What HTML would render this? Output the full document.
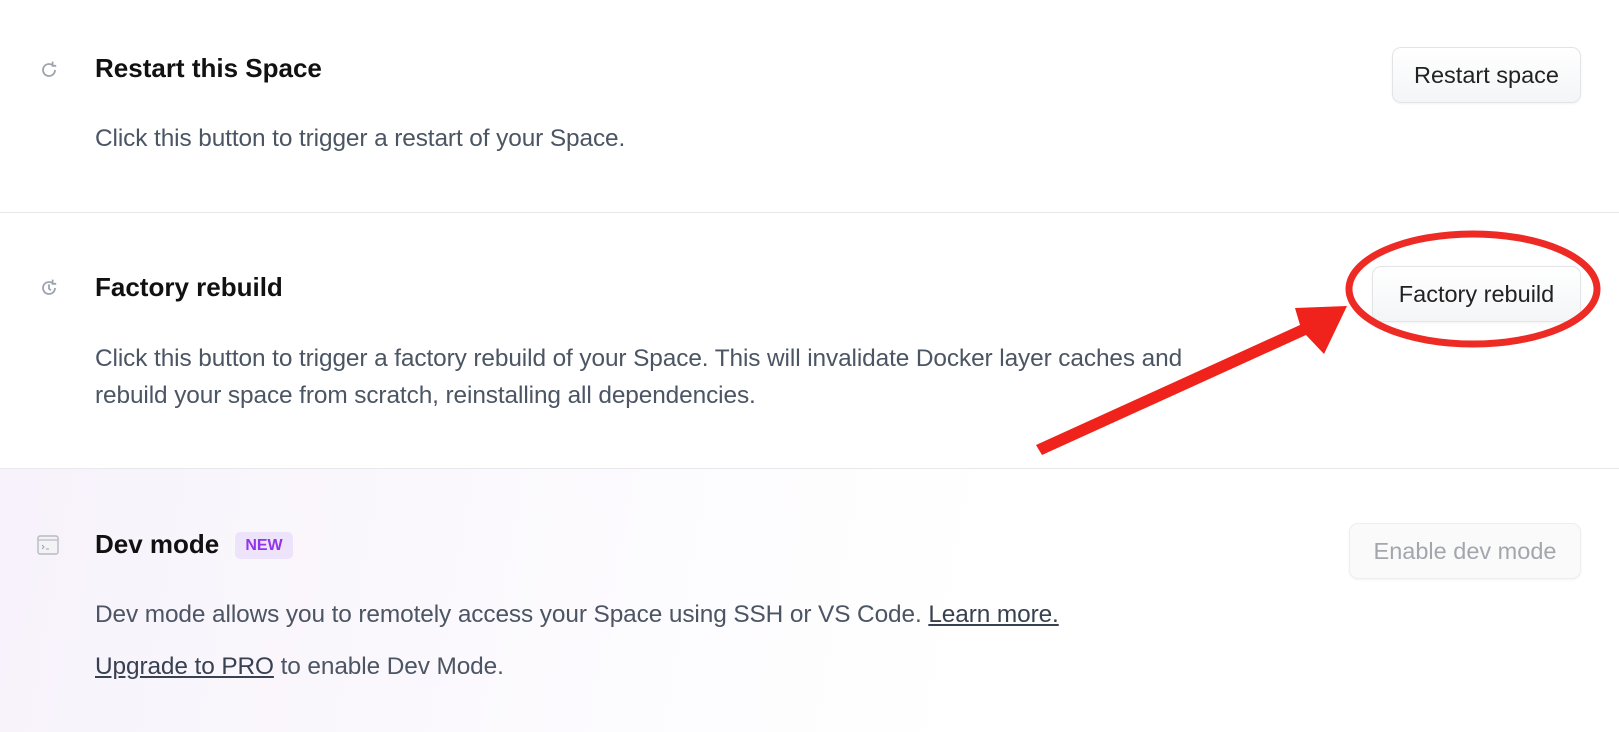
<!DOCTYPE html>
<html><head><style>
body{margin:0;width:1619px;height:732px;background:#fff;font-family:"Liberation Sans",sans-serif;position:relative;overflow:hidden}
.t{position:absolute;left:95px;font-weight:bold;font-size:26px;color:#111}
.d{position:absolute;left:95px;font-size:24.4px;color:#4b5563;line-height:37px;white-space:nowrap;letter-spacing:-0.1px}
.hr{position:absolute;left:0;right:0;height:1px;background:#e8e8ec}
.btn{position:absolute;border:1px solid #e3e4e8;border-radius:9px;background:linear-gradient(#fff,#f4f5f7);font-size:23.5px;color:#222;display:flex;align-items:center;justify-content:center;box-shadow:0 1px 2px rgba(0,0,0,.05)}
.ic{position:absolute;left:37px}
u{color:#374151}
</style></head><body>
<div style="position:absolute;left:0;top:468px;width:1619px;height:264px;background:linear-gradient(100deg,#f7f2fb 0%,#fbf9fd 30%,#fff 60%)"></div>
<svg class="ic" style="top:58px" width="24" height="24" viewBox="0 0 20 20"><path d="M15 10a5 5 0 1 1-2-4" fill="none" stroke="#9ca3af" stroke-width="1.5"/><path d="M13 3v3.5h3" fill="none" stroke="#9ca3af" stroke-width="1.5"/></svg>
<div class="t" style="top:53px">Restart this Space</div>
<div class="d" style="top:120px">Click this button to trigger a restart of your Space.</div>
<div class="btn" style="left:1392px;top:47px;width:187px;height:54px">Restart space</div>
<div class="hr" style="top:212px"></div>
<svg class="ic" style="top:276px" width="24" height="24" viewBox="0 0 20 20"><path d="M15 10a5 5 0 1 1-2-4" fill="none" stroke="#9ca3af" stroke-width="1.5"/><path d="M13 3v3.5h3M10 7v3.5l1.5 1.5" fill="none" stroke="#9ca3af" stroke-width="1.5"/></svg>
<div class="t" style="top:272px">Factory rebuild</div>
<div class="d" style="top:340px">Click this button to trigger a factory rebuild of your Space. This will invalidate Docker layer caches and<br>rebuild your space from scratch, reinstalling all dependencies.</div>
<div class="btn" style="left:1372px;top:266px;width:207px;height:54px">Factory rebuild</div>
<div class="hr" style="top:468px"></div>
<svg class="ic" style="top:535px" width="22" height="20" viewBox="0 0 22 20"><rect x="1" y="1" width="20" height="18" rx="2" fill="#f3f3f6" stroke="#b8bbc2" stroke-width="1.4"/><path d="M1 5h20" stroke="#b8bbc2" stroke-width="1.2"/><path d="M5 10l2 2-2 2M9 14h3" fill="none" stroke="#9ca3af" stroke-width="1"/></svg>
<div class="t" style="top:529px">Dev mode</div>
<div style="position:absolute;left:235px;top:532px;width:58px;height:27px;background:#ede4fb;border-radius:5px;color:#9333ea;font-weight:bold;font-size:16px;display:flex;align-items:center;justify-content:center">NEW</div>
<div class="d" style="top:596px">Dev mode allows you to remotely access your Space using SSH or VS Code. <u>Learn more.</u></div>
<div class="d" style="top:648px"><u>Upgrade to PRO</u> to enable Dev Mode.</div>
<div class="btn" style="left:1349px;top:523px;width:230px;height:54px;color:#a3a6ad;background:#fafafb;border-color:#eceef1">Enable dev mode</div>
<svg style="position:absolute;left:0;top:0" width="1619" height="732">
<ellipse cx="1473" cy="289" rx="124" ry="55" fill="none" stroke="#ee2a24" stroke-width="7"/>
<path d="M1042 455 L1306 335 L1324 354 L1347 306 L1295 308 L1300 325 L1036 445 Z" fill="#f0221c"/>
</svg>
</body></html>
